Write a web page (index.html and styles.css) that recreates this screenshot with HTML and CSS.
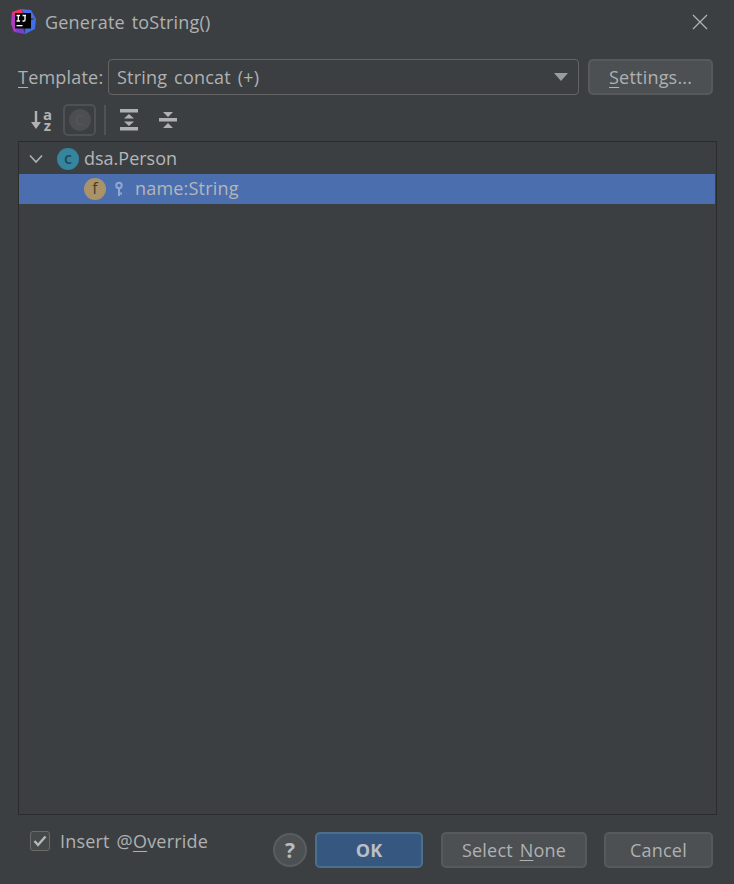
FILE: index.html
```html
<!DOCTYPE html>
<html lang="en">

<head>
    <meta charset="UTF-8">
    <meta name="viewport" content="width=device-width, initial-scale=1.0">
    <title>Generate toString()</title>
    <link rel="stylesheet" href="styles.css">
</head>

<body>
    <div class="dialog">
        <!-- title bar -->
        <header class="titlebar">
            <svg class="logo" viewBox="0 0 26 26">
                <polygon points="2,3 11,0 15,8 5,14" fill="#fe315d"></polygon>
                <polygon points="11,0 21,1 26,10 17,8" fill="#4a6cf0"></polygon>
                <polygon points="26,9 25,20 15,25 16,14" fill="#3f6fe8"></polygon>
                <polygon points="2,3 1,15 4,23 12,22 8,10" fill="#b03ac0"></polygon>
                <polygon points="4,23 15,25 12,16" fill="#7a3fd0"></polygon>
                <rect x="5" y="4" width="16" height="15.500" fill="#000"></rect>
                <rect x="6.500" y="16" width="6" height="1.300" fill="#fff"></rect>
                <path d="M6.500 6.500h3.600M8.300 6.500v5.500M6.500 12h3.600M12.500 6.500h3.500M15 6.500v4.500q0 1-1 1h-1.500" fill="none" stroke="#fff" stroke-width="1.300"></path>
            </svg>
            <span class="title">Generate toString()</span>
            <svg class="close" viewBox="0 0 16 16">
                <path d="M1 1L15 15M15 1L1 15" fill="none" stroke="#afb1b3" stroke-width="1.300"></path>
            </svg>
        </header>

        <!-- template row -->
        <div class="template-row">
            <label class="template-label"><u>T</u>emplate:</label>
            <div class="combo">
                <span>String concat (+)</span>
                <i class="combo-arrow"></i>
            </div>
            <button class="btn btn-settings"><u>S</u>ettings...</button>
        </div>

        <!-- toolbar -->
        <div class="toolbar">
            <div class="tool tool-sort">
                <svg viewBox="0 0 10 18" width="10" height="18">
                    <path d="M3.800 0h2.400v11H10L5 18 0 11h3.800z" fill="#afb1b3"></path>
                </svg>
                <span class="sort-letters">a z</span>
            </div>
            <div class="tool tool-on">
                <span class="tool-c">C</span>
            </div>
            <span class="tool-sep"></span>
            <div class="tool">
                <svg viewBox="0 0 18 22" width="18" height="22">
                    <path d="M0 0h18v3.500H0zM0 18h18v3.500H0z" fill="#afb1b3"></path>
                    <path d="M9 5l5 4.500H4zM9 17l-5-4.500h10z" fill="#afb1b3"></path>
                </svg>
            </div>
            <div class="tool">
                <svg viewBox="0 0 18 18" width="18" height="18">
                    <path d="M0 7h18v3.500H0z" fill="#afb1b3"></path>
                    <path d="M9 6L4 1h10zM9 12l5 5H4z" fill="#afb1b3"></path>
                </svg>
            </div>
        </div>

        <!-- member tree -->
        <div class="tree">
            <div class="tree-row tree-row-class">
                <svg class="chevron" viewBox="0 0 14 10">
                    <path d="M1 1.500L7 8l6-6.500" fill="none" stroke="#afb1b3" stroke-width="1.600"></path>
                </svg>
                <span class="badge badge-class">c</span>
                <span class="tree-text">dsa.Person</span>
            </div>
            <div class="tree-row tree-row-sel">
                <span class="badge badge-field">f</span>
                <svg class="key" viewBox="0 0 10 16">
                    <circle cx="4" cy="4.500" r="2.700" fill="none" stroke="#8fa8cf" stroke-width="2"></circle>
                    <path d="M4 7v8M4 12.500h3" fill="none" stroke="#8fa8cf" stroke-width="2"></path>
                </svg>
                <span class="tree-text">name:String</span>
            </div>
        </div>

        <!-- bottom buttons -->
        <footer class="footer">
            <label class="check">
                <span class="check-box">
                    <svg viewBox="0 0 14 12" width="14" height="12">
                        <path d="M1.500 6l3.500 4L12.500 1.500" fill="none" stroke="#b5b7b9" stroke-width="2.400"></path>
                    </svg>
                </span>
                <span>Insert @<u>O</u>verride</span>
            </label>
            <div class="footer-btns">
                <button class="help">?</button>
                <button class="btn btn-ok">OK</button>
                <button class="btn btn-none">Select <u>N</u>one</button>
                <button class="btn btn-cancel">Cancel</button>
            </div>
        </footer>
    </div>
</body>

</html>
```

FILE: styles.css
```css
html,
body {
    margin: 0;
    padding: 0;
}

body {
    width: 734px;
    height: 884px;
    overflow: hidden;
    color: #afb1b3;
    background-color: #3c3f41;
    font-family: "Open Sans", "Noto Sans", sans-serif;
    font-size: 18px;
    letter-spacing: 0.2px;
    word-spacing: 2px;
}

.dialog {
    display: flex;
    flex-direction: column;
    height: 884px;
    box-sizing: border-box;
}

u {
    text-underline-offset: 3px;
}

/* title bar */
.titlebar {
    display: flex;
    align-items: center;
    height: 44px;
    padding: 0 26px 0 10px;
}

.logo {
    width: 26px;
    height: 26px;
    margin-right: 9px;
}

.title {
    flex: 1;
}

.close {
    width: 16px;
    height: 16px;
}

/* template row */
.template-row {
    display: flex;
    align-items: center;
    gap: 9px;
    height: 36px;
    margin-top: 15px;
    padding: 0 21px 0 18px;
}

.template-label {
    width: 81px;
}

.combo {
    display: flex;
    align-items: center;
    justify-content: space-between;
    box-sizing: border-box;
    width: 472px;
    height: 36px;
    padding: 0 10px 0 8px;
    border: 1px solid #646464;
    border-radius: 4px;
}

.combo-arrow {
    width: 0;
    height: 0;
    border-top: 8px solid #9a9c9e;
    border-left: 7px solid transparent;
    border-right: 7px solid transparent;
}

.btn {
    box-sizing: border-box;
    height: 36px;
    padding: 0;
    color: #afb1b3;
    background-color: #4c5052;
    border: 2px solid #565a5c;
    border-radius: 5px;
    font: inherit;
    letter-spacing: inherit;
    word-spacing: inherit;
}

.btn-settings {
    width: 125px;
}

/* toolbar */
.toolbar {
    display: flex;
    align-items: center;
    height: 32px;
    margin-top: 9px;
    padding-left: 24px;
}

.tool {
    display: flex;
    align-items: center;
    justify-content: center;
    width: 32px;
    height: 32px;
    box-sizing: border-box;
}

.tool + .tool {
    margin-left: 7px;
}

.tool-sort {
    gap: 2px;
    padding-left: 3px;
}

/* the two letters wrap onto two lines */
.sort-letters {
    width: 9px;
    color: #afb1b3;
    font-size: 15px;
    font-weight: 700;
    line-height: 11px;
    text-align: center;
}

.tool-on {
    width: 33px;
    margin-left: 7px;
    border: 2px solid #4e5254;
    border-radius: 5px;
}

.tool-c {
    width: 22px;
    height: 22px;
    line-height: 21px;
    border-radius: 50%;
    color: #55585a;
    background-color: #4c4e50;
    font-size: 14px;
    text-align: center;
}

.tool-sep {
    width: 2px;
    height: 30px;
    margin: 0 7px 0 8px;
    background-color: #505254;
}

/* tree */
.tree {
    flex: 1;
    margin: 5px 17px 0 18px;
    padding: 2px 1px 0 0;
    border: 1px solid #2b2b2b;
}

.tree-row {
    display: flex;
    align-items: center;
    height: 30px;
    padding-left: 10px;
}

.tree-row-class {
    letter-spacing: 0;
}

.tree-row-sel {
    padding-left: 65px;
    background-color: #4b6eaf;
}

.chevron {
    width: 14px;
    height: 10px;
    margin-right: 14px;
}

.badge {
    display: block;
    width: 22px;
    height: 22px;
    margin-right: 5px;
    border-radius: 50%;
    font-size: 16px;
    line-height: 20px;
    text-align: center;
}

.badge-class {
    color: #1d4a5c;
    background-color: #35859f;
    font-weight: 600;
}

.badge-field {
    margin-right: 9px;
    color: #4a3c24;
    background-color: #ab9369;
}

.key {
    width: 10px;
    height: 16px;
    margin-right: 10px;
}

.tree-text {
    position: relative;
    top: -1px;
    color: #b4b6b8;
}

/* footer */
.footer {
    display: flex;
    justify-content: space-between;
    height: 69px;
    padding: 0 21px 0 30px;
}

.check {
    display: flex;
    align-items: center;
    align-self: flex-start;
    margin-top: 14px;
    gap: 10px;
}

.check-box {
    display: flex;
    align-items: center;
    justify-content: center;
    box-sizing: border-box;
    width: 20px;
    height: 20px;
    border: 1px solid #6b6b6b;
    border-radius: 3px;
    background-color: #45494a;
}

.footer-btns {
    display: flex;
    align-items: flex-start;
    padding-top: 17px;
}

.help {
    box-sizing: border-box;
    width: 34px;
    height: 34px;
    margin: 1px 8px 0 0;
    padding: 0;
    color: #b9bbbd;
    background-color: #4c5052;
    border: 2px solid #5a5d5f;
    border-radius: 50%;
    font: 700 21px "Open Sans", sans-serif;
}

.btn-ok {
    width: 108px;
    color: #bbbfc4;
    background-color: #365880;
    border-color: #4c708c;
    font-weight: 700;
}

.btn-none {
    width: 146px;
    margin-left: 18px;
}

.btn-cancel {
    width: 109px;
    margin-left: 17px;
}
```
